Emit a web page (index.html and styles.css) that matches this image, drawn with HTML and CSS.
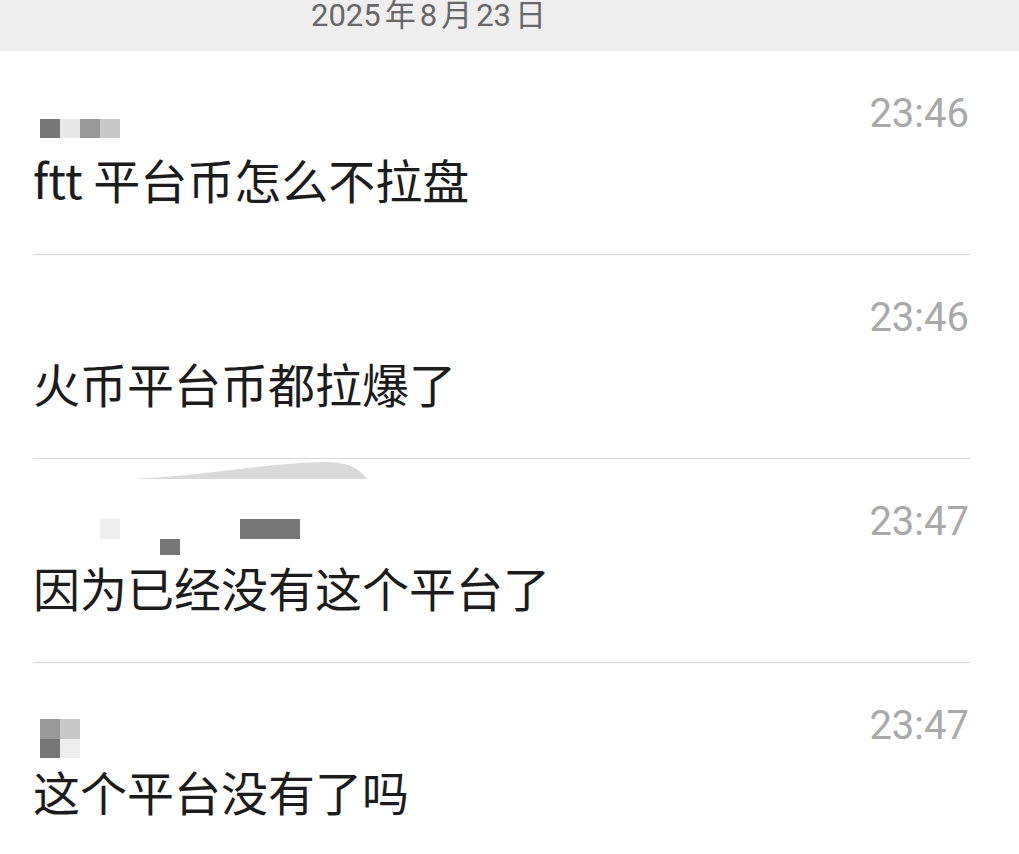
FILE: index.html
```html
<!DOCTYPE html>
<html lang="zh-CN">
<head>
<meta charset="utf-8">
<title>聊天记录</title>
<link rel="stylesheet" href="styles.css">
</head>
<body>
<div class="page">
  <header class="date-bar">
    <div class="date"><span class="num first">2025</span>年<span class="num">8</span>月<span class="num">23</span>日</div>
  </header>
  <main class="list">
    <section class="row">
      <div class="head">
        <div class="mosaic m1">
          <i class="c c1 r1 g77"></i><i class="c c2 r1 ge8"></i><i class="c c3 r1 g99"></i><i class="c c4 r1 gc8"></i>
        </div>
        <div class="time">23:46</div>
      </div>
      <p class="msg"><span class="latin">ftt</span> <span class="wide">平台币怎么不拉盘</span></p>
    </section>
    <section class="row">
      <div class="head">
        <div class="mosaic"></div>
        <div class="time">23:46</div>
      </div>
      <p class="msg">火币平台币都拉爆了</p>
    </section>
    <section class="row">
      <svg class="smudge" width="240" height="20" viewBox="0 0 240 20" aria-hidden="true">
        <path d="M3 19 C70 16 130 4 190 2 C214 1 228 6 237 19 Z" fill="#dadada"/>
      </svg>
      <div class="head">
        <div class="mosaic m3">
          <i class="c c4 r1 gee"></i><i class="c c7 r2 g77 short"></i><i class="c c11 span3 r1 g77"></i>
        </div>
        <div class="time">23:47</div>
      </div>
      <p class="msg">因为已经没有这个平台了</p>
    </section>
    <section class="row">
      <div class="head">
        <div class="mosaic m4">
          <i class="c c1 r1 g99"></i><i class="c c2 r1 gc8"></i><i class="c c1 r2 g77"></i><i class="c c2 r2 gee"></i>
        </div>
        <div class="time">23:47</div>
      </div>
      <p class="msg">这个平台没有了吗</p>
    </section>
  </main>
</div>
</body>
</html>
```

FILE: styles.css
```css
* { box-sizing: border-box; }
html, body {
  margin: 0;
  padding: 0;
  background: #ffffff;
}
.page {
  width: 1019px;
  height: 854px;
  overflow: hidden;
  font-family: "Noto Sans CJK SC", "Noto Sans", sans-serif;
}
.date-bar {
  height: 51px;
  background: #efefef;
  padding-left: 311px;
}
.date {
  font-family: Roboto, "Noto Sans CJK SC", sans-serif;
  font-size: 31px;
  line-height: 31px;
  color: #686868;
  display: flex;
  align-items: baseline;
}
.date .num { margin: 0 4px; }
.date .num.first { margin-left: 0; }

.list {
  padding: 0 49px 0 33px;
}
.row {
  position: relative;
  height: 204px;
  border-bottom: 1px solid #d9d9d9;
  padding-top: 40px;
}
.head {
  height: 64px;
  display: flex;
  justify-content: space-between;
  align-items: flex-start;
}
.time {
  font-family: Roboto, "Noto Sans", sans-serif;
  font-size: 40px;
  line-height: 1;
  color: #a9a9a9;
  margin-right: 1px;
  margin-top: 3px;
}
.mosaic {
  display: grid;
  grid-template-columns: repeat(14, 20px);
  grid-template-rows: 20px 20px;
  margin-left: 7px;
}
.mosaic.m1 { margin-top: 28px; grid-template-rows: 19px; }
.mosaic.m3 { margin-top: 20px; grid-template-rows: 20px 16px; }
.mosaic.m4 { margin-top: 16px; grid-template-rows: 20px 19px; }
.c { display: block; }
.c1 { grid-column: 1; }
.c2 { grid-column: 2; }
.c3 { grid-column: 3; }
.c4 { grid-column: 4; }
.c7 { grid-column: 7; }
.c11.span3 { grid-column: 11 / span 3; }
.r1 { grid-row: 1; }
.r2 { grid-row: 2; }
.g77 { background: #777777; }
.g99 { background: #999999; }
.gc8 { background: #c8c8c8; }
.ge8 { background: #e8e8e8; }
.gee { background: #eeeeee; }

.msg {
  margin: 0;
  font-size: 47px;
  line-height: 47px;
  color: #1c1c1c;
  white-space: nowrap;
}
.msg .wide { letter-spacing: 0; }

.smudge {
  position: absolute;
  left: 97px;
  top: 1px;
}
```
